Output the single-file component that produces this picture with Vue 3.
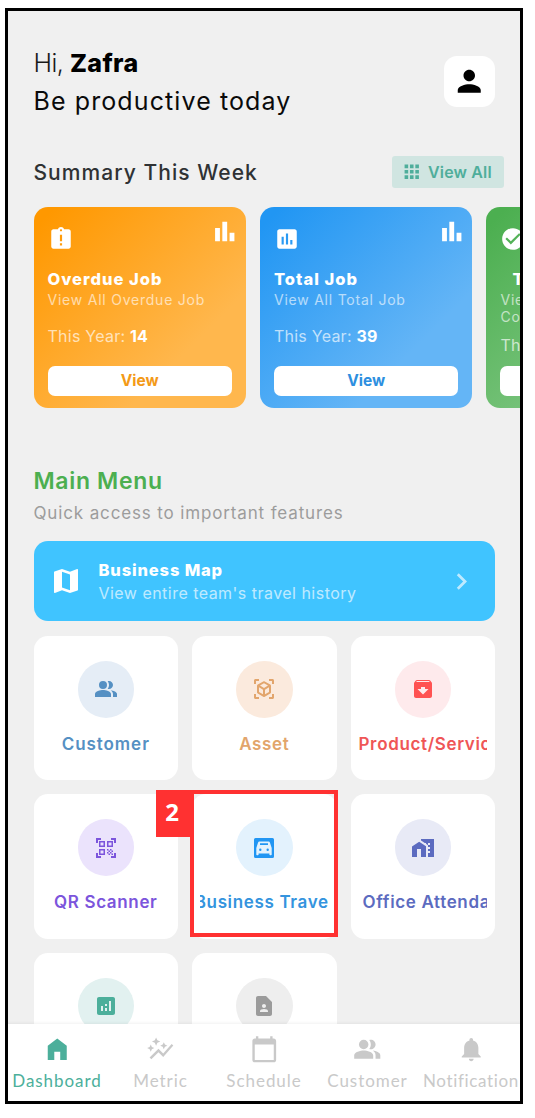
<script setup>
const square = 'M19 3H5c-1.1 0-2 .9-2 2v14c0 1.1.9 2 2 2h14c1.1 0 2-.9 2-2V5c0-1.1-.9-2-2-2z'
const icons = {
  person: 'M12 12c2.21 0 4-1.79 4-4s-1.79-4-4-4-4 1.79-4 4 1.79 4 4 4zm0 2c-2.67 0-8 1.34-8 4v2h16v-2c0-2.66-5.33-4-8-4z',
  apps: 'M4 8h4V4H4v4zm6 12h4v-4h-4v4zm-6 0h4v-4H4v4zm0-6h4v-4H4v4zm6 0h4v-4h-4v4zm6-10v4h4V4h-4zm-6 4h4V4h-4v4zm6 6h4v-4h-4v4zm0 6h4v-4h-4v4z',
  late: 'M19 3h-4.18C14.4 1.84 13.3 1 12 1c-1.3 0-2.4.84-2.82 2H5c-1.1 0-2 .9-2 2v14c0 1.1.9 2 2 2h14c1.1 0 2-.9 2-2V5c0-1.1-.9-2-2-2zm-6 15h-2v-2h2v2zm0-4h-2V8h2v6zm-1-9c-.55 0-1-.45-1-1s.45-1 1-1 1 .45 1 1-.45 1-1 1z',
  assessment: square + 'M9 17H7v-7h2v7zm4 0h-2V7h2v10zm4 0h-2v-4h2v4z',
  check: 'M12 2C6.48 2 2 6.48 2 12s4.48 10 10 10 10-4.48 10-10S17.52 2 12 2zm-2 15l-5-5 1.41-1.41L10 14.17l7.59-7.59L19 8l-9 9z',
  bars: 'M4 9h4v11H4zM16 13h4v7h-4zM10 4h4v16h-4z',
  map: 'M20.5 3l-.16.03L15 5.1 9 3 3.36 4.9c-.21.07-.36.25-.36.48V20.5c0 .28.22.5.5.5l.16-.03L9 18.9l6 2.1 5.64-1.9c.21-.07.36-.25.36-.48V3.5c0-.28-.22-.5-.5-.5zM15 19l-6-2.11V5l6 2.11V19z',
  chevron: 'M10 6L8.59 7.41 13.17 12l-4.58 4.59L10 18l6-6z',
  people: 'M16.67 13.13C18.04 14.06 19 15.32 19 17v3h4v-3c0-2.18-3.57-3.47-6.33-3.87zM9 4a4 4 0 1 0 0 8a4 4 0 1 0 0-8zM15 12c2.21 0 4-1.79 4-4s-1.79-4-4-4c-.47 0-.91.1-1.33.24C14.5 5.27 15 6.58 15 8s-.5 2.73-1.33 3.76c.42.14.86.24 1.33.24zM9 13c-2.67 0-8 1.34-8 4v3h16v-3c0-2.66-5.33-4-8-4z',
  cube: 'M18.25 7.6l-5.5-3.18c-.46-.27-1.04-.27-1.5 0L5.75 7.6c-.46.27-.75.76-.75 1.3v6.35c0 .54.29 1.03.75 1.3l5.5 3.18c.46.27 1.04.27 1.5 0l5.5-3.18c.46-.27.75-.76.75-1.3V8.9c0-.54-.29-1.03-.75-1.3zM7 14.96v-4.62l4 2.32v4.61l-4-2.31zm5-4.03L8 8.61l4-2.31 4 2.31-4 2.32zm1 6.34v-4.61l4-2.32v4.62l-4 2.31zM7 2H3.5C2.67 2 2 2.67 2 3.5V7h2V4h3V2zm10 0h3.5c.83 0 1.5.67 1.5 1.5V7h-2V4h-3V2zM7 22H3.5c-.83 0-1.5-.67-1.5-1.5V17h2v3h3v2zm10 0h3.5c.83 0 1.5-.67 1.5-1.5V17h-2v3h-3v2z',
  archive: 'M20.54 5.23l-1.39-1.68C18.88 3.21 18.47 3 18 3H6c-.47 0-.88.21-1.16.55L3.46 5.23C3.17 5.57 3 6.02 3 6.5V19c0 1.1.9 2 2 2h14c1.1 0 2-.9 2-2V6.5c0-.48-.17-.93-.46-1.27zM12 17.5L6.5 12H10v-2h4v2h3.5L12 17.5zM5.12 5l.81-1h12l.94 1H5.12z',
  qr: 'M9.5 6.5v3h-3v-3h3M11 5H5v6h6V5zm-1.5 9.5v3h-3v-3h3M11 13H5v6h6v-6zm6.5-6.5v3h-3v-3h3M19 5h-6v6h6V5zm-6 8h1.5v1.5H13V13zm1.5 1.5H16V16h-1.5v-1.5zM16 13h1.5v1.5H16V13zm-3 3h1.5v1.5H13V16zm1.5 1.5H16V19h-1.5v-1.5zM16 16h1.5v1.5H16V16zm1.5-1.5H19V16h-1.5v-1.5zm0 3H19V19h-1.5v-1.5zM22 7h-2V4h-3V2h5v5zm0 15v-5h-2v3h-3v2h5zM2 22h5v-2H4v-3H2v5zM2 2v5h2V4h3V2H2z',
  car: 'M3.500 2h17a1.500 1.500 0 0 1 1.500 1.500v17a1.500 1.500 0 0 1-1.500 1.500h-17a1.500 1.500 0 0 1-1.500-1.500v-17a1.500 1.500 0 0 1 1.500-1.500zM7.300 5.500q-.9 0-1.200.9L4.300 12V18.500q0 .8.8.8h.7q.8 0 .8-.8v-1h10.800v1q0 .8.8.8h.7q.8 0 .8-.8V12L17.900 6.400q-.3-.9-1.200-.9zM8 7.300h8v1.800H8zM8.300 12.600a1.200 1.200 0 1 0 0 2.400a1.200 1.200 0 1 0 0-2.400zM15.700 12.600a1.200 1.200 0 1 0 0 2.400a1.200 1.200 0 1 0 0-2.400z',
  office: 'M8.17 5.7L1 10.48V21h5v-8h4v8h5V10.25zM10 3v1.51l2 1.33L13.73 7H15v.85l2 1.34V11h2v2h-2v2h2v2h-2v4h6V3H10zm9 6h-2V7h2v2z',
  analytics: square + 'M9 17H7v-5h2v5zm4 0h-2v-3h2v3zm0-5h-2v-2h2v2zm4 5h-2V7h2v10z',
  contact: 'M14 2H6c-1.1 0-2 .9-2 2v16c0 1.1.9 2 2 2h12c1.1 0 2-.9 2-2V8l-6-6zM12 10c1.1 0 2 .9 2 2s-.9 2-2 2-2-.9-2-2 .9-2 2-2zm4 8H8v-.57c0-.81.48-1.53 1.22-1.85.85-.37 1.79-.58 2.78-.58.99 0 1.93.21 2.78.58.74.32 1.22 1.04 1.22 1.85V18z',
  home: 'M4 9l8-6 8 6v12h-5.5v-7h-5v7H4z',
  metric: 'M14.06 9.94L12 9l2.06-.94L15 6l.94 2.06L18 9l-2.06.94L15 12l-.94-2.06zM4 14l.94-2.06L7 11l-2.06-.94L4 8l-.94 2.06L1 11l2.06.94L4 14zm4.5-5l1.09-2.41L12 5.5 9.59 4.41 8.5 2 7.41 4.41 5 5.5l2.41 1.09L8.5 9zm-4 11.5l6-6.01 4 4L23 8.93l-1.41-1.41-7.09 7.97-4-4L3 19l1.5 1.5z',
  calendar: 'M20 3h-1V1h-2v2H7V1H5v2H4c-1.1 0-2 .9-2 2v16c0 1.1.9 2 2 2h16c1.1 0 2-.9 2-2V5c0-1.1-.9-2-2-2zm0 18H4V8h16v13z',
  bell: 'M12 22c1.1 0 2-.9 2-2h-4c0 1.1.89 2 2 2zm6-6v-5c0-3.07-1.64-5.64-4.5-6.32V4c0-.83-.67-1.5-1.5-1.5s-1.5.67-1.5 1.5v.68C7.63 5.36 6 7.92 6 11v5l-2 2v1h16v-1l-2-2z',
}

const jobs = [
  { tone: 'orange', icon: 'late', title: 'Overdue Job', sub: 'View All Overdue Job', count: 14 },
  { tone: 'blue', icon: 'assessment', title: 'Total Job', sub: 'View All Total Job', count: 39 },
  { tone: 'green', icon: 'check', title: 'Total Completed', sub: 'View All Job\nCompleted', count: 25 },
]
const menu = [
  { tone: 'steel', icon: 'people', label: 'Customer' },
  { tone: 'sand', icon: 'cube', label: 'Asset' },
  { tone: 'red', icon: 'archive', label: 'Product/Service' },
  { tone: 'violet', icon: 'qr', label: 'QR Scanner' },
  { tone: 'sky', icon: 'car', label: 'Business Travel', step: 2 },
  { tone: 'indigo', icon: 'office', label: 'Office Attendance' },
  { tone: 'teal', icon: 'analytics', label: '' },
  { tone: 'gray', icon: 'contact', label: '' },
]
const tabs = [
  { icon: 'home', label: 'Dashboard' },
  { icon: 'metric', label: 'Metric' },
  { icon: 'calendar', label: 'Schedule' },
  { icon: 'people', label: 'Customer' },
  { icon: 'bell', label: 'Notification' },
]
</script>

<template>
  <div class="page">
    <div class="screen">
      <main class="content">
        <header class="header">
          <div class="greeting">
            <div class="hi">Hi, <b>Zafra</b></div>
            <div class="tagline">Be productive today</div>
          </div>
          <button class="avatar"><svg viewBox="0 0 24 24"><path :d="icons.person" /></svg></button>
        </header>

        <div class="summary-head">
          <h2>Summary This Week</h2>
          <button class="view-all">
            <svg viewBox="0 0 24 24"><path :d="icons.apps" /></svg><span>View All</span>
          </button>
        </div>

        <div class="jobs">
          <article v-for="j in jobs" :key="j.tone" class="job" :class="j.tone">
            <div class="job-top">
              <svg class="job-icon" viewBox="0 0 24 24"><path fill-rule="evenodd" :d="icons[j.icon]" /></svg>
              <svg class="job-bars" viewBox="0 0 24 24"><path :d="icons.bars" /></svg>
            </div>
            <h3>{{ j.title }}</h3>
            <p class="job-sub">{{ j.sub }}</p>
            <p class="job-year">This Year: <b>{{ j.count }}</b></p>
            <button class="job-btn">View</button>
          </article>
        </div>

        <h1>Main Menu</h1>
        <p class="lead">Quick access to important features</p>

        <div class="banner">
          <svg class="banner-map" viewBox="0 0 24 24"><path :d="icons.map" /></svg>
          <div class="banner-text">
            <h3>Business Map</h3>
            <p>View entire team's travel history</p>
          </div>
          <svg class="banner-arrow" viewBox="0 0 24 24"><path :d="icons.chevron" /></svg>
        </div>

        <div class="menu">
          <div v-for="m in menu" :key="m.icon" class="tile" :class="m.tone">
            <div class="disc"><svg viewBox="0 0 24 24"><path fill-rule="evenodd" :d="icons[m.icon]" /></svg></div>
            <div class="label"><span>{{ m.label }}</span></div>
            <div v-if="m.step" class="marker"><span class="step">{{ m.step }}</span></div>
          </div>
        </div>
      </main>

      <nav class="tabs">
        <a v-for="(t, i) in tabs" :key="t.label" class="tab" :class="[t.icon, { active: i === 0 }]">
          <svg viewBox="0 0 24 24"><path :d="icons[t.icon]" /></svg>
          <span>{{ t.label }}</span>
        </a>
      </nav>
    </div>
  </div>
</template>

<style>
body { background: #fff; overflow: hidden; }
</style>

<style scoped>
* { box-sizing: border-box; margin: 0; padding: 0; }
svg { display: block; fill: currentColor; flex: none; }
button { border: 0; font: inherit; color: inherit; }
.page { height: 1118px; padding: 8px 0 0 5px; font-family: Inter, "Open Sans", sans-serif; }
.screen { width: 518px; height: 1096px; border: 3px solid #000; background: #f0f0f0; overflow: hidden; display: flex; flex-direction: column; }
.content { flex: 1; min-height: 0; padding: 33px 25px 0 25.5px; overflow: hidden; }
.header { display: flex; justify-content: space-between; align-items: center; height: 76px; }
.avatar { position: relative; top: -.5px; width: 51px; height: 51px; border-radius: 13px; background: #fff; display: grid; place-items: center; color: #000; }
.hi, .tagline { font-size: 25px; line-height: 38px; white-space: nowrap; color: #0a0a0a; }
.hi { font-weight: 300; letter-spacing: -.5px; color: #1a1a1a; }
.hi b { font-weight: 800; letter-spacing: .4px; color: #000; }
.tagline { letter-spacing: 1.1px; }
.avatar svg { width: 34.5px; height: 34.5px; }
.summary-head { display: flex; justify-content: space-between; align-items: center; margin: 36px -8.5px 0 0; height: 31.5px; }
h2 { padding-top: 1px; font-size: 21px; line-height: 31.5px; font-weight: 500; letter-spacing: 1.05px; color: #2f3234; white-space: nowrap; }
.view-all { display: flex; align-items: center; gap: 6px; width: 111.5px; height: 31.5px; padding: 0 0 0 8.5px; border-radius: 3px; background: #d0e5e1; color: #4fae9b; font-size: 16px; font-weight: 600; letter-spacing: .15px; white-space: nowrap; }
.view-all svg { width: 21.5px; height: 21.5px; }
.jobs { display: flex; gap: 14.2px; margin-top: 19.5px; }
.job { flex: 0 0 212.3px; height: 201px; border-radius: 14px; padding: 10px 14px 12.5px; display: flex; flex-direction: column; color: #fff; }
.job.orange { background: linear-gradient(135deg, #ff9800 5%, #ffb74d 72%); }
.job.blue { background: linear-gradient(135deg, #2196f3 5%, #64b5f6 72%); }
.job.green { background: linear-gradient(135deg, #4caf50 5%, #81c784 72%); }
.job-top { display: flex; justify-content: space-between; height: 51px; }
.job-icon { width: 26px; height: 26px; margin-top: 9px; }
.job-bars { width: 29.5px; height: 29px; margin-right: -8px; }
h3 { font-size: 16.5px; line-height: 23px; font-weight: 800; letter-spacing: 1px; white-space: nowrap; }
.job-sub { font-size: 14px; line-height: 17px; letter-spacing: .77px; white-space: pre-line; opacity: .62; }
.job-year { font-size: 16px; line-height: 22px; margin-top: 17px; letter-spacing: .24px; white-space: nowrap; color: rgba(255, 255, 255, .68); }
.job-year b { color: #fff; font-weight: 700; }
.job-btn { height: 30px; margin-top: auto; border-radius: 7px; background: #fff; font-size: 15.5px; font-weight: 700; }
.orange .job-btn { color: #f39a18; }
.blue .job-btn { color: #2d8fe0; }
.green h3 { text-indent: 12px; }
.green .job-year { margin-top: 8.5px; }
h1 { margin-top: 57.5px; font-size: 23px; line-height: 30px; font-weight: 600; letter-spacing: .65px; color: #4caf50; }
.lead { margin-top: 5.2px; font-size: 17px; line-height: 24px; letter-spacing: .86px; color: #9c9c9c; white-space: nowrap; }
.banner { display: flex; align-items: center; height: 80px; margin-top: 16.5px; padding: 0 17px 0 16.5px; border-radius: 14px; background: #40c4ff; color: #fff; }
.banner-map { width: 32px; height: 32px; }
.banner-text { flex: 1; margin: 1.5px 0 0 16.5px; }
.banner-text h3 { letter-spacing: .85px; }
.banner-text p { font-size: 16px; line-height: 23px; letter-spacing: .47px; white-space: nowrap; opacity: .66; }
.banner-arrow { width: 33px; height: 33px; opacity: .66; }
.menu { display: grid; grid-template-columns: repeat(3, minmax(0, 1fr)); gap: 14px; margin-top: 15px; }
.tile { position: relative; height: 144.2px; border-radius: 14px; background: #fff; padding: 25px 8px 0; }
.disc { width: 56.5px; height: 56.5px; margin: 0 auto; border-radius: 50%; display: grid; place-items: center; }
.disc svg { width: 24px; height: 24px; }
.label { display: flex; justify-content: center; margin-top: 14px; overflow: hidden; font-size: 17px; line-height: 24px; font-weight: 600; letter-spacing: .65px; white-space: nowrap; }
.steel { color: #5590c3; } .steel .disc { background: #e5edf6; }
.steel .label { letter-spacing: .95px; }
.sand { color: #e2a56c; } .sand .disc { background: #fbeadd; }
.red { color: #ef5656; } .red .disc { background: #feeaec; } .red .disc svg { color: #ff5252; }
.violet { color: #7c55dc; } .violet .disc { background: #ebe3fc; }
.sky { color: #2196f3; } .sky .disc { background: #e3f2fd; }
.sky .label { color: #3494de; }
.indigo { color: #5c6bc0; } .indigo .disc { background: #e8eaf6; }
.teal { color: #4caf9b; } .teal .disc { background: #e2f1f0; }
.gray { color: #9b9b9b; } .gray .disc { background: #eee; }
.red .label, .indigo .label { justify-content: flex-start; }
.indigo .label { padding-left: 4px; letter-spacing: .65px; }
.marker { position: absolute; inset: -4px -1.5px 1.5px -2.5px; border: 4px solid #ff3131; }
.step { position: absolute; left: -38px; top: -4px; width: 35px; height: 47px; background: #ff3131; color: #fff; font: 700 24px/44px "Open Sans", sans-serif; text-align: center; text-indent: -2px; }
.tabs { position: relative; flex: none; display: flex; height: 77px; margin: 0 -2.75px; padding-top: 11px; background: #fff; box-shadow: 0 -1px 3px rgba(0, 0, 0, .06); color: #c9c9c9; }
.tab { flex: 1 1 0; min-width: 0; display: flex; flex-direction: column; align-items: center; font: 400 17px/20px Lato, sans-serif; letter-spacing: .95px; white-space: nowrap; }
.tab.bell { letter-spacing: .65px; }
.tab svg { width: 28.5px; height: 28.5px; margin-bottom: 7px; }
.tab.active { color: #4caf9b; }
</style>
